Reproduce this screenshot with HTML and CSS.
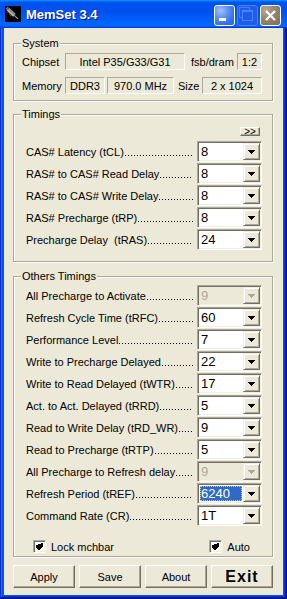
FILE: index.html
```html
<!DOCTYPE html>
<html lang="en">
<head>
    <meta charset="UTF-8">
    <meta name="viewport" content="width=device-width, initial-scale=1.0">
    <title>MemSet 3.4</title>
    <link rel="stylesheet" href="styles.css">
</head>
<body>
<div class="window">
    <div class="titlebar">
        <svg class="app-icon" width="16" height="16" viewBox="0 0 16 16">
            <rect width="16" height="16" fill="#000"/>
            <g transform="rotate(-45 8 8)">
                <rect x="6.5" y="-1" width="3" height="2" fill="#6f6b62"/>
                <rect x="6" y="1" width="4" height="9" fill="#8e8a7e"/>
                <rect x="6.5" y="1" width="1" height="9" fill="#c9c5b8"/>
                <rect x="5" y="3" width="1" height="1" fill="#8e8a7e"/>
                <rect x="5" y="5" width="1" height="1" fill="#8e8a7e"/>
                <rect x="5" y="7" width="1" height="1" fill="#8e8a7e"/>
                <rect x="7.5" y="10" width="1" height="5" fill="#a8a498"/>
            </g>
        </svg>
        <span class="title">MemSet 3.4</span>
        <div class="title-buttons">
            <span class="tb tb-min"><i></i></span>
            <span class="tb tb-max"><i></i></span>
            <span class="tb tb-close">
                <svg width="11" height="11" viewBox="0 0 11 11">
                    <path d="M1 1L10 10M10 1L1 10" stroke="#fff" stroke-width="2.2" fill="none"/>
                </svg>
            </span>
        </div>
    </div>

    <div class="client">
        <div class="group system">
            <span class="group-title">System</span>
            <div class="sys-row">
                <span class="sys-label">Chipset</span>
                <span class="field chipset">Intel P35/G33/G31</span>
                <span class="sys-text">fsb/dram</span>
                <span class="field ratio">1:2</span>
            </div>
            <div class="sys-row">
                <span class="sys-label">Memory</span>
                <span class="field mem-type">DDR3</span>
                <span class="field mem-freq">970.0 MHz</span>
                <span class="sys-text size-text">Size</span>
                <span class="field mem-size">2 x 1024</span>
            </div>
        </div>

        <div class="group timings">
            <span class="group-title">Timings</span>
            <div class="more-row"><span class="btn btn-more">&gt;&gt;</span></div>
            <div class="rows">
                <div class="row">
                    <span class="row-label">CAS# Latency (tCL)</span><span class="leader"></span>
                    <div class="combo"><span class="combo-value">8</span><span class="combo-btn"><svg width="7" height="4"><path d="M0 0h7v1h-1v1h-1v1h-1v1h-1v-1h-1v-1h-1v-1h-1z"/></svg></span></div>
                </div>
                <div class="row">
                    <span class="row-label">RAS# to CAS# Read Delay</span><span class="leader"></span>
                    <div class="combo"><span class="combo-value">8</span><span class="combo-btn"><svg width="7" height="4"><path d="M0 0h7v1h-1v1h-1v1h-1v1h-1v-1h-1v-1h-1v-1h-1z"/></svg></span></div>
                </div>
                <div class="row">
                    <span class="row-label">RAS# to CAS# Write Delay</span><span class="leader"></span>
                    <div class="combo"><span class="combo-value">8</span><span class="combo-btn"><svg width="7" height="4"><path d="M0 0h7v1h-1v1h-1v1h-1v1h-1v-1h-1v-1h-1v-1h-1z"/></svg></span></div>
                </div>
                <div class="row">
                    <span class="row-label">RAS# Precharge (tRP)</span><span class="leader"></span>
                    <div class="combo"><span class="combo-value">8</span><span class="combo-btn"><svg width="7" height="4"><path d="M0 0h7v1h-1v1h-1v1h-1v1h-1v-1h-1v-1h-1v-1h-1z"/></svg></span></div>
                </div>
                <div class="row">
                    <span class="row-label">Precharge Delay&nbsp; (tRAS)</span><span class="leader"></span>
                    <div class="combo"><span class="combo-value">24</span><span class="combo-btn"><svg width="7" height="4"><path d="M0 0h7v1h-1v1h-1v1h-1v1h-1v-1h-1v-1h-1v-1h-1z"/></svg></span></div>
                </div>
            </div>
        </div>

        <div class="group others">
            <span class="group-title">Others Timings</span>
            <div class="rows">
                <div class="row">
                    <span class="row-label">All Precharge to Activate</span><span class="leader"></span>
                    <div class="combo disabled"><span class="combo-value">9</span><span class="combo-btn"><svg width="7" height="4"><path d="M0 0h7v1h-1v1h-1v1h-1v1h-1v-1h-1v-1h-1v-1h-1z"/></svg></span></div>
                </div>
                <div class="row">
                    <span class="row-label">Refresh Cycle Time (tRFC)</span><span class="leader"></span>
                    <div class="combo"><span class="combo-value">60</span><span class="combo-btn"><svg width="7" height="4"><path d="M0 0h7v1h-1v1h-1v1h-1v1h-1v-1h-1v-1h-1v-1h-1z"/></svg></span></div>
                </div>
                <div class="row">
                    <span class="row-label">Performance Level</span><span class="leader"></span>
                    <div class="combo"><span class="combo-value">7</span><span class="combo-btn"><svg width="7" height="4"><path d="M0 0h7v1h-1v1h-1v1h-1v1h-1v-1h-1v-1h-1v-1h-1z"/></svg></span></div>
                </div>
                <div class="row">
                    <span class="row-label">Write to Precharge Delayed</span><span class="leader"></span>
                    <div class="combo"><span class="combo-value">22</span><span class="combo-btn"><svg width="7" height="4"><path d="M0 0h7v1h-1v1h-1v1h-1v1h-1v-1h-1v-1h-1v-1h-1z"/></svg></span></div>
                </div>
                <div class="row">
                    <span class="row-label">Write to Read Delayed (tWTR)</span><span class="leader"></span>
                    <div class="combo"><span class="combo-value">17</span><span class="combo-btn"><svg width="7" height="4"><path d="M0 0h7v1h-1v1h-1v1h-1v1h-1v-1h-1v-1h-1v-1h-1z"/></svg></span></div>
                </div>
                <div class="row">
                    <span class="row-label">Act. to Act. Delayed (tRRD)</span><span class="leader"></span>
                    <div class="combo"><span class="combo-value">5</span><span class="combo-btn"><svg width="7" height="4"><path d="M0 0h7v1h-1v1h-1v1h-1v1h-1v-1h-1v-1h-1v-1h-1z"/></svg></span></div>
                </div>
                <div class="row">
                    <span class="row-label">Read to Write Delay (tRD_WR)</span><span class="leader"></span>
                    <div class="combo"><span class="combo-value">9</span><span class="combo-btn"><svg width="7" height="4"><path d="M0 0h7v1h-1v1h-1v1h-1v1h-1v-1h-1v-1h-1v-1h-1z"/></svg></span></div>
                </div>
                <div class="row">
                    <span class="row-label">Read to Precharge (tRTP)</span><span class="leader"></span>
                    <div class="combo"><span class="combo-value">5</span><span class="combo-btn"><svg width="7" height="4"><path d="M0 0h7v1h-1v1h-1v1h-1v1h-1v-1h-1v-1h-1v-1h-1z"/></svg></span></div>
                </div>
                <div class="row">
                    <span class="row-label">All Precharge to Refresh delay</span><span class="leader"></span>
                    <div class="combo disabled"><span class="combo-value">9</span><span class="combo-btn"><svg width="7" height="4"><path d="M0 0h7v1h-1v1h-1v1h-1v1h-1v-1h-1v-1h-1v-1h-1z"/></svg></span></div>
                </div>
                <div class="row">
                    <span class="row-label">Refresh Period (tREF)</span><span class="leader"></span>
                    <div class="combo selected"><span class="combo-value">6240</span><span class="combo-btn"><svg width="7" height="4"><path d="M0 0h7v1h-1v1h-1v1h-1v1h-1v-1h-1v-1h-1v-1h-1z"/></svg></span></div>
                </div>
                <div class="row">
                    <span class="row-label">Command Rate (CR)</span><span class="leader"></span>
                    <div class="combo"><span class="combo-value">1T</span><span class="combo-btn"><svg width="7" height="4"><path d="M0 0h7v1h-1v1h-1v1h-1v1h-1v-1h-1v-1h-1v-1h-1z"/></svg></span></div>
                </div>
            </div>
            <div class="checks">
                <label class="check lock">
                    <span class="check-box"><svg width="7" height="7" viewBox="0 0 7 7"><path d="M0 2v3l2 2h1l4-4V0z" fill="#000"/></svg></span>
                    Lock mchbar
                </label>
                <label class="check auto">
                    <span class="check-box"><svg width="7" height="7" viewBox="0 0 7 7"><path d="M0 2v3l2 2h1l4-4V0z" fill="#000"/></svg></span>
                    Auto
                </label>
            </div>
        </div>

        <div class="actions">
            <span class="btn">Apply</span>
            <span class="btn">Save</span>
            <span class="btn">About</span>
            <span class="btn btn-exit">Exit</span>
        </div>
    </div>
</div>
</body>
</html>
```

FILE: styles.css
```css
body {
    margin: 0;
    width: 287px;
    height: 599px;
    overflow: hidden;
    font-family: "Liberation Sans", Arial, sans-serif;
    font-size: 11px;
    color: #000;
    background: #0855dd;
}

.window {
    width: 287px;
    height: 599px;
    box-sizing: border-box;
    display: flex;
    flex-direction: column;
    background: #0855dd;
    box-shadow: inset -1px -1px #00138c, inset 1px 1px #0831d9,
                inset -2px -2px #001ea0, inset 2px 2px #166aee,
                inset -3px -3px #003bda, inset 3px 3px #0855dd;
}

/* title bar */
.titlebar {
    height: 28px;
    flex: none;
    display: flex;
    align-items: flex-start;
    padding: 0 6px 0 5px;
    box-sizing: border-box;
    background: linear-gradient(180deg, #0997ff, #0053ee 8%, #0050ee 40%, #0066ff 88%, #0066ff 93%, #005bff 95%, #003dd7 96%, #003dd7);
}

.app-icon {
    margin-top: 6px;
    flex: none;
}

.title {
    margin: 8px 0 0 5px;
    line-height: 14px;
    font-size: 13px;
    font-weight: bold;
    color: #fff;
    text-shadow: 1px 1px #0f1089;
}

.title-buttons {
    margin: 5px 0 0 auto;
    display: flex;
    gap: 2px;
}

.tb {
    width: 21px;
    height: 21px;
    box-sizing: border-box;
    border: 1px solid #fff;
    border-radius: 3px;
    display: flex;
}

.tb-min {
    background: radial-gradient(circle at 30% 25%, #a6c3fb 0, #6a9af6 30%, #3a74ef 65%, #235fe6 100%);
    align-items: flex-end;
    padding: 0 0 4px 4px;
}

.tb-min i {
    width: 7px;
    height: 3px;
    background: #fff;
}

.tb-max {
    border-color: #4a83f3;
    background: #1d5ced;
    align-items: center;
    justify-content: center;
}

.tb-max i {
    width: 9px;
    height: 8px;
    border: 1px solid #4a83f3;
    border-top-width: 2px;
    box-shadow: -3px -3px 0 -1px #1d5ced, -3px -3px 0 0 #4a83f3;
}

.tb-close {
    background: radial-gradient(circle at 25% 20%, #b4a898 0, #958472 45%, #7e6c5a 100%);
    align-items: center;
    justify-content: center;
}

/* client area */
.client {
    flex: 1;
    margin: 0 4px 4px;
    padding: 0 10px 0 9px;
    background: #ece9d8;
    display: flex;
    flex-direction: column;
}

.group {
    position: relative;
    border: 1px solid #aca899;
    box-shadow: inset 1px 1px #fff, 1px 1px #fff;
}

.group-title {
    position: absolute;
    left: 7px;
    top: -7px;
    padding: 0 1px;
    line-height: 13px;
    background: #ece9d8;
}

.system {
    margin-top: 15px;
    padding: 9px 10px 6px 8px;
}

.sys-row {
    display: flex;
    align-items: center;
    height: 17px;
}

.sys-row + .sys-row {
    margin-top: 7px;
}

.sys-label {
    width: 43px;
}

.field {
    height: 17px;
    box-sizing: border-box;
    border: 1px solid;
    border-color: #aca899 #fff #fff #aca899;
    display: flex;
    align-items: center;
    justify-content: center;
}

.chipset { width: 120px; }
.ratio { width: 25px; margin-left: auto; }
.mem-type { width: 40px; }
.mem-freq { width: 67px; margin-left: 2px; }
.mem-size { width: 60px; margin-left: auto; }

.sys-text {
    margin-left: 6px;
}

.size-text {
    margin-left: 4px;
}

.timings {
    margin-top: 13px;
    padding: 12px 10px 11px 12px;
}

.others {
    margin-top: 14px;
    padding: 8px 10px 3px 12px;
}

.more-row {
    display: flex;
    justify-content: flex-end;
    margin-bottom: 5px;
}

.rows {
    display: flex;
    flex-direction: column;
    gap: 1px;
}

.row {
    height: 21px;
    display: flex;
    align-items: center;
}

.row-label {
    white-space: nowrap;
}

/* dotted leader between label and combo */
.leader {
    flex: 1;
    align-self: flex-start;
    height: 1px;
    margin: 14px 4px 0 1px;
    background: repeating-linear-gradient(to right, #000 0 1px, transparent 1px 3px);
}

/* combo boxes */
.combo {
    width: 65px;
    height: 21px;
    flex: none;
    box-sizing: border-box;
    padding: 1px;
    border: 1px solid;
    border-color: #aca899 #fff #fff #aca899;
    box-shadow: inset 1px 1px #716f64, inset -1px -1px #f1efe2;
    background: #fff;
    display: flex;
}

.combo-value {
    flex: 1;
    margin: 1px;
    padding-left: 1px;
    font-size: 13px;
    line-height: 15px;
}

.combo-btn {
    width: 17px;
    box-sizing: border-box;
    border: 1px solid;
    border-color: #f1efe2 #716f64 #716f64 #f1efe2;
    box-shadow: inset 1px 1px #fff, inset -1px -1px #aca899;
    background: #ece9d8;
    display: flex;
    align-items: center;
    justify-content: center;
    fill: #000;
}

.combo-btn svg {
    display: block;
    shape-rendering: crispEdges;
}

.combo.disabled {
    background: #ece9d8;
    color: #aca899;
}

.combo.disabled .combo-btn {
    fill: #aca899;
}

.combo.selected .combo-value {
    background: #316ac5;
    color: #fff;
    outline: 1px dotted #e8c65c;
    outline-offset: -1px;
}

/* checkboxes */
.checks {
    margin-top: 14px;
    height: 13px;
    display: flex;
    align-items: center;
}

.check {
    display: flex;
    align-items: center;
    gap: 5px;
}

.lock {
    margin-left: 7px;
}

.auto {
    margin-left: auto;
    margin-right: 12px;
}

.check-box {
    width: 13px;
    height: 13px;
    box-sizing: border-box;
    border: 1px solid;
    border-color: #aca899 #fff #fff #aca899;
    box-shadow: inset 1px 1px #716f64, inset -1px -1px #f1efe2;
    background: #fff;
    display: flex;
    align-items: center;
    justify-content: center;
}

.check-box svg {
    display: block;
    shape-rendering: crispEdges;
}

/* buttons */
.btn {
    box-sizing: border-box;
    border: 1px solid;
    border-color: #fff #716f64 #716f64 #fff;
    box-shadow: inset -1px -1px #aca899;
    background: #ece9d8;
    display: flex;
    align-items: center;
    justify-content: center;
}

.btn-more {
    width: 20px;
    height: 9px;
    margin-right: 2px;
    font-size: 10px;
    line-height: 7px;
}

.actions {
    margin-top: 8px;
    display: grid;
    grid-template-columns: repeat(4, 1fr);
    gap: 4px;
}

.actions .btn {
    height: 23px;
}

.btn-exit {
    font-size: 16px;
    font-weight: bold;
    letter-spacing: 1px;
}
```
